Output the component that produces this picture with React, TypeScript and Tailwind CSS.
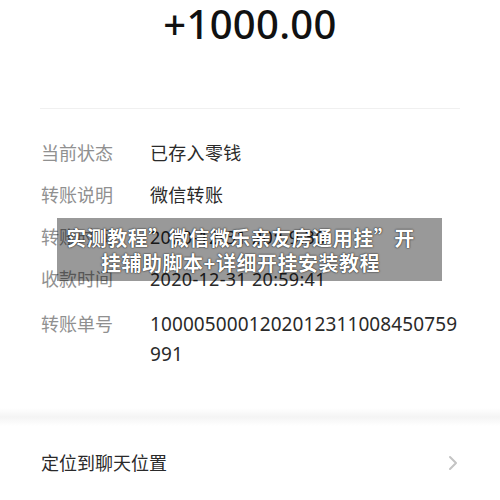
import React from "react";

const rows = [
  { label: "当前状态", value: "已存入零钱" },
  { label: "转账说明", value: "微信转账" },
  { label: "转账时间", value: "2020-12-31 20:59:30" },
  { label: "收款时间", value: "2020-12-31 20:59:41" },
];

export default function App() {
  return (
    <div
      className="relative w-[500px] h-[500px] overflow-hidden bg-white text-[#1a1a1a]"
      style={{ fontFamily: '"Noto Sans", "Noto Sans CJK SC", sans-serif' }}
    >
      {/* amount */}
      <div className="h-[108px] flex justify-center pt-[3px]">
        <span className="text-[40px] leading-[42px] font-medium tracking-[0.3px] text-[#111]">+1000.00</span>
      </div>
      <div className="mx-[40px] border-t border-[#f0f0f0]" />

      {/* details */}
      <div className="pt-[23px] pl-[41px] pr-[40px]">
        {rows.map((r) => (
          <div key={r.label} className="flex items-center h-[42px] text-[18px]">
            <span className="w-[109px] shrink-0 text-[#909090]">{r.label}</span>
            <span className="text-[#2a2a2a] text-[18px] tracking-[0.3px]">{r.value}</span>
          </div>
        ))}
        <div className="flex text-[18px] pt-[9px]">
          <span className="w-[109px] shrink-0 text-[#909090] leading-[30px]">转账单号</span>
          <div className="text-[#2a2a2a] text-[19px] leading-[30px] tracking-[0.1px]">
            <div>1000050001202012311008450759</div>
            <div>991</div>
          </div>
        </div>
      </div>

      {/* separator band */}
      <div className="absolute left-0 right-0 top-[408px] h-[18px] bg-gradient-to-b from-white via-[#f4f4f4] to-white" />

      {/* bottom row */}
      <div className="absolute left-0 right-0 top-[448px] h-[30px] flex items-center justify-between pl-[41px] pr-[40px]">
        <span className="text-[18px] text-[#2a2a2a]">定位到聊天位置</span>
        <svg width="12" height="16" viewBox="0 0 12 16" fill="none" className="mr-[1px]">
          <path d="M3 2 L9 8 L3 14" stroke="#c4c4c4" strokeWidth="2" strokeLinecap="round" strokeLinejoin="round" />
        </svg>
      </div>

      {/* overlay caption */}
      <div className="absolute left-[57px] top-[218px] w-[385px] h-[63px] bg-black/40 flex flex-col items-center justify-center pr-[18px]">
        <p
          className="text-white font-bold text-[20px] leading-[25px] tracking-[0.5px] text-center whitespace-nowrap"
          style={{
            fontFamily: '"Noto Sans CJK SC", sans-serif',
            textShadow: "0 0 2px rgba(0,0,0,0.7), 0 0 1px rgba(0,0,0,0.8)",
          }}
        >
          实测教程”微信微乐亲友房通用挂”开
          <br />
          挂辅助脚本+详细开挂安装教程
        </p>
      </div>
    </div>
  );
}
